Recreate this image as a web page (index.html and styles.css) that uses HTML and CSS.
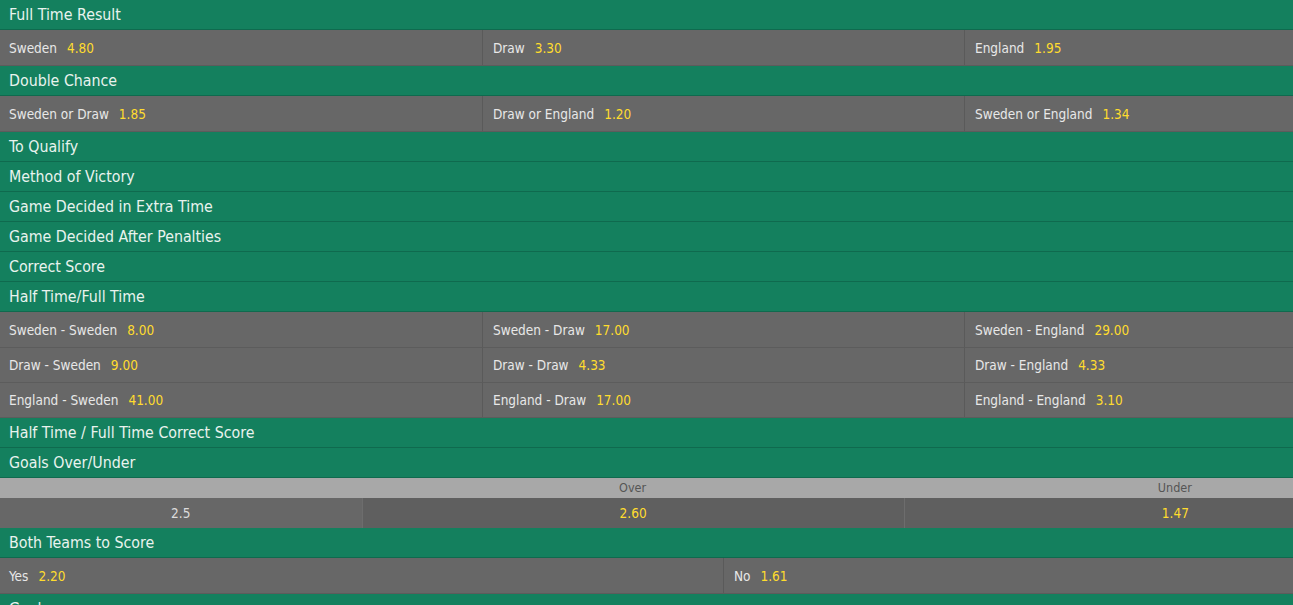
FILE: index.html
```html
<!DOCTYPE html>
<html lang="en">
<head>
    <meta charset="UTF-8">
    <title>Sweden v England - Markets</title>
    <link rel="stylesheet" href="styles.css">
</head>
<body>

<div class="markets">

    <div class="market">
        <div class="market-title">Full Time Result</div>
        <div class="outcomes cols-3">
            <div class="outcome"><span class="name">Sweden</span><span class="odds">4.80</span></div>
            <div class="outcome"><span class="name">Draw</span><span class="odds">3.30</span></div>
            <div class="outcome"><span class="name">England</span><span class="odds">1.95</span></div>
        </div>
    </div>

    <div class="market">
        <div class="market-title">Double Chance</div>
        <div class="outcomes cols-3">
            <div class="outcome"><span class="name">Sweden or Draw</span><span class="odds">1.85</span></div>
            <div class="outcome"><span class="name">Draw or England</span><span class="odds">1.20</span></div>
            <div class="outcome"><span class="name">Sweden or England</span><span class="odds">1.34</span></div>
        </div>
    </div>

    <div class="market"><div class="market-title">To Qualify</div></div>
    <div class="market"><div class="market-title">Method of Victory</div></div>
    <div class="market"><div class="market-title">Game Decided in Extra Time</div></div>
    <div class="market"><div class="market-title">Game Decided After Penalties</div></div>
    <div class="market"><div class="market-title">Correct Score</div></div>

    <div class="market">
        <div class="market-title">Half Time/Full Time</div>
        <div class="outcomes cols-3">
            <div class="outcome"><span class="name">Sweden - Sweden</span><span class="odds">8.00</span></div>
            <div class="outcome"><span class="name">Sweden - Draw</span><span class="odds">17.00</span></div>
            <div class="outcome"><span class="name">Sweden - England</span><span class="odds">29.00</span></div>
            <div class="outcome"><span class="name">Draw - Sweden</span><span class="odds">9.00</span></div>
            <div class="outcome"><span class="name">Draw - Draw</span><span class="odds">4.33</span></div>
            <div class="outcome"><span class="name">Draw - England</span><span class="odds">4.33</span></div>
            <div class="outcome"><span class="name">England - Sweden</span><span class="odds">41.00</span></div>
            <div class="outcome"><span class="name">England - Draw</span><span class="odds">17.00</span></div>
            <div class="outcome"><span class="name">England - England</span><span class="odds">3.10</span></div>
        </div>
    </div>

    <div class="market"><div class="market-title">Half Time / Full Time Correct Score</div></div>

    <div class="market">
        <div class="market-title">Goals Over/Under</div>
        <div class="line-table">
            <div class="line-head"></div>
            <div class="line-head">Over</div>
            <div class="line-head">Under</div>
            <div class="line-value">2.5</div>
            <div class="line-odds">2.60</div>
            <div class="line-odds">1.47</div>
        </div>
    </div>

    <div class="market">
        <div class="market-title">Both Teams to Score</div>
        <div class="outcomes cols-2">
            <div class="outcome"><span class="name">Yes</span><span class="odds">2.20</span></div>
            <div class="outcome"><span class="name">No</span><span class="odds">1.61</span></div>
        </div>
    </div>

    <div class="market"><div class="market-title">Goalscorers</div></div>

</div>

</body>
</html>
```

FILE: styles.css
```css
html, body {
    overflow: hidden;
}

body {
    margin: 0;
    background-color: #676767;
    font-family: 'DejaVu Sans Condensed', 'DejaVu Sans', sans-serif;
    color: #e8e8e8;
}

.markets {
    width: 1446px;
}

.market-title {
    height: 28px;
    line-height: 28px;
    padding: 1px 0 0 9px;
    background-color: #14805e;
    border-bottom: 1px solid #0f6a4e;
    color: #e9f3ee;
    font-size: 15.8px;
}

.outcomes {
    display: grid;
    background-color: #676767;
    border-bottom: 1px solid #5c5c5c;
}

.cols-3 {
    grid-template-columns: repeat(3, 1fr);
}

.cols-2 {
    grid-template-columns: repeat(2, 1fr);
}

.outcome {
    display: flex;
    align-items: center;
    gap: 10px;
    height: 34px;
    padding-left: 10px;
    border-left: 1px solid #5a5a5a;
    border-top: 1px solid #5c5c5c;
    font-size: 13.5px;
}

.outcomes .outcome:nth-child(-n+3) {
    border-top: none;
    height: 35px;
}

.cols-3 .outcome:nth-child(3n+1),
.cols-2 .outcome:nth-child(2n+1) {
    border-left: none;
    padding-left: 9px;
}

.odds {
    color: #ffdc2e;
}

.line-table {
    display: grid;
    grid-template-columns: 25% 37.5% 37.5%;
}

.line-head {
    height: 20px;
    line-height: 20px;
    background-color: #a8a8a8;
    color: #555;
    text-align: center;
    font-size: 12.5px;
}

.line-value,
.line-odds {
    height: 30px;
    line-height: 30px;
    text-align: center;
    font-size: 13.5px;
}

.line-value {
    background-color: #676767;
    color: #dcdcdc;
}

.line-odds {
    background-color: #5f5f5f;
    color: #ffdc2e;
    border-left: 1px solid #6d6d6d;
}
```
